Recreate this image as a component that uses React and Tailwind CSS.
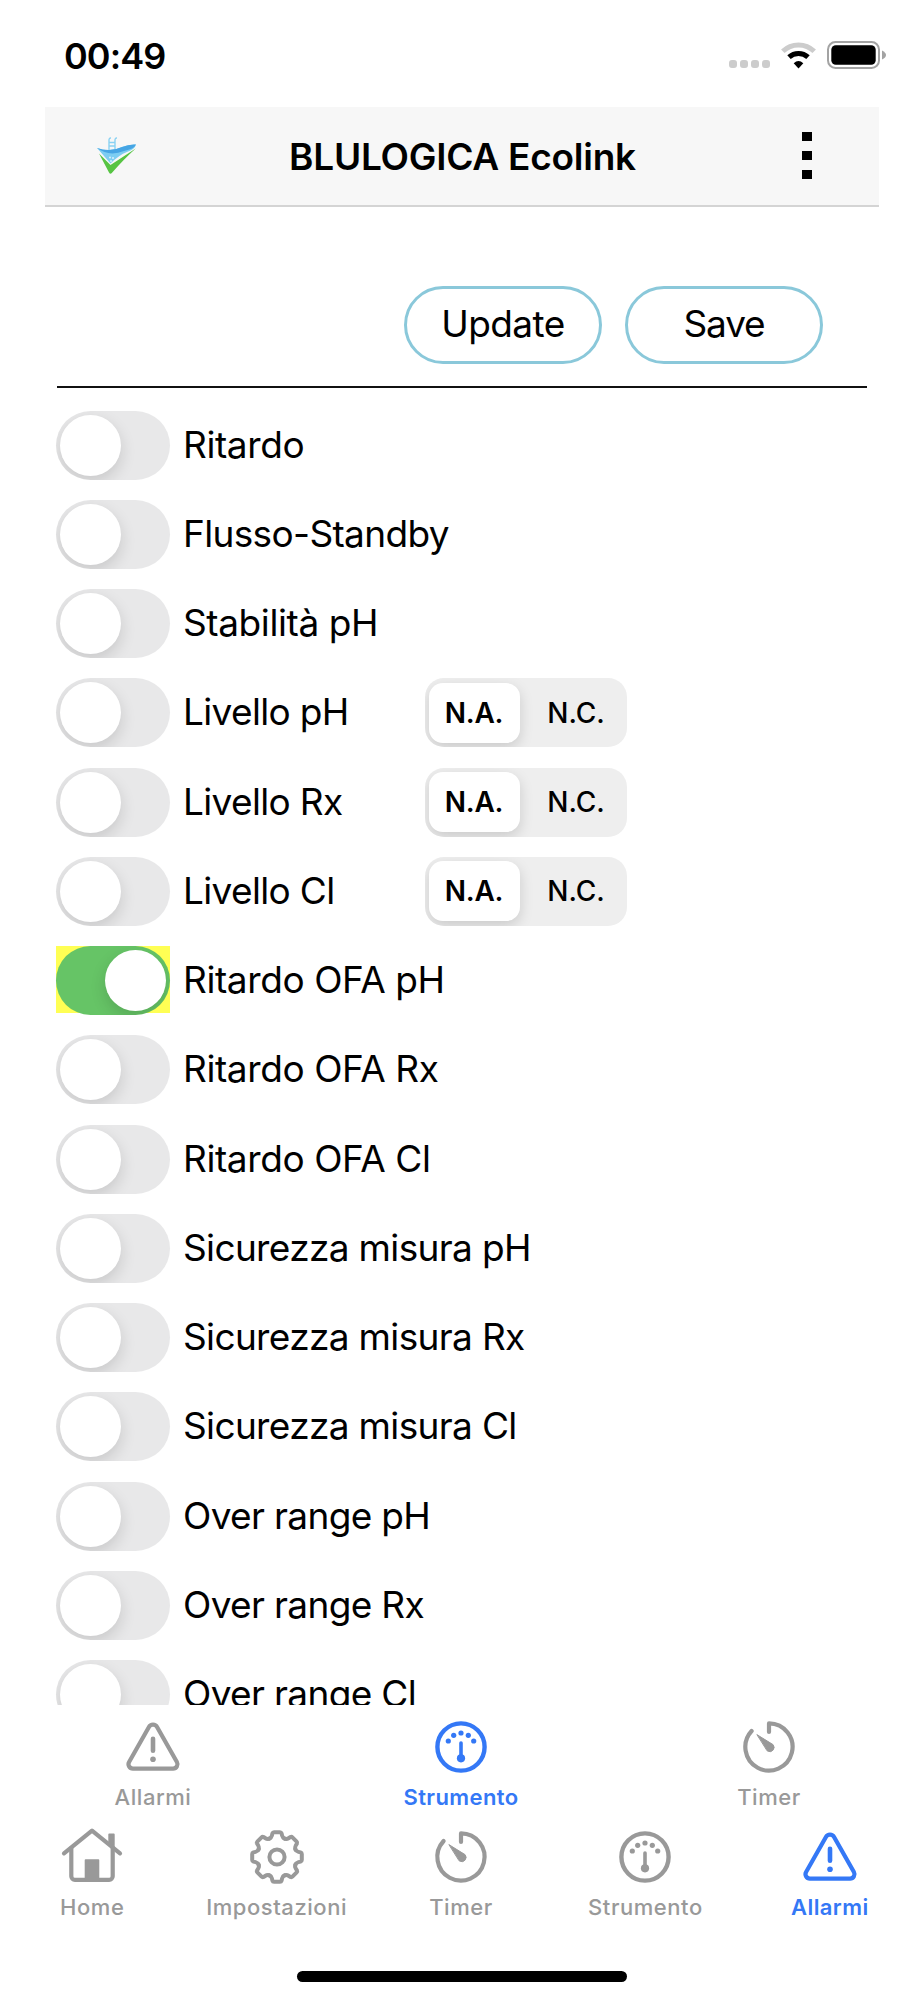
import clsx from "clsx";

const alarms = [
  { label: "Ritardo", wide: true },
  { label: "Flusso-Standby" },
  { label: "Stabilità pH", wide: true },
  { label: "Livello pH", contact: true },
  { label: "Livello Rx", contact: true },
  { label: "Livello Cl", contact: true },
  { label: "Ritardo OFA pH", wide: true, on: true },
  { label: "Ritardo OFA Rx", wide: true },
  { label: "Ritardo OFA Cl", wide: true },
  { label: "Sicurezza misura pH" },
  { label: "Sicurezza misura Rx" },
  { label: "Sicurezza misura Cl" },
  { label: "Over range pH" },
  { label: "Over range Rx" },
  { label: "Over range Cl" },
];

// Icons share a 64x64 box centred on 0,0
const Icon = ({ children }) => (
  <svg
    viewBox="-32 -32 64 64"
    className="h-16 w-16"
    fill="none"
    stroke="currentColor"
    strokeWidth="4.4"
    strokeLinecap="round"
    strokeLinejoin="round"
  >
    {children}
  </svg>
);

const AlarmIcon = () => (
  <Icon>
    <path
      d="M-4.2 -19.8a4.8 4.8 0 0 1 8.4 0L23.9 15a4.4 4.4 0 0 1 -3.8 6.6H-20.1a4.4 4.4 0 0 1 -3.8 -6.6Z"
      strokeWidth="4.2"
    />
    <path d="M0 -8.2V3.8" strokeWidth="4.6" />
    <circle cy="12.2" r="2.8" fill="currentColor" stroke="none" />
  </Icon>
);

const GaugeIcon = () => (
  <Icon>
    <circle r="23.6" />
    <path d="M0 -4V10" strokeWidth="3.6" />
    <g fill="currentColor" stroke="none">
      <circle cy="11.3" r="4.1" />
      <circle cx="-12.7" cy="-6" r="2.6" />
      <circle cx="-7.3" cy="-11.7" r="2.6" />
      <circle cy="-14" r="2.6" />
      <circle cx="7.3" cy="-11.7" r="2.6" />
      <circle cx="12.7" cy="-6" r="2.6" />
    </g>
  </Icon>
);

const TimerIcon = () => (
  <Icon>
    <path d="M0 -15V-23.6A23.6 23.6 0 1 1 -17.4 -16" strokeWidth="4.2" />
    <path
      d="M-11.8 -12.2L4 -2.4A4.3 4.3 0 0 1 -1.6 4Z"
      fill="currentColor"
      strokeWidth="1"
    />
  </Icon>
);

const HomeIcon = () => (
  <Icon>
    <path d="M-28 -3.6L0 -26.3L28 -3.6" strokeWidth="4.2" />
    <path d="M-20.7 -9V19.2a3.6 3.6 0 0 0 3.6 3.6H17.1a3.6 3.6 0 0 0 3.6 -3.6V-9" strokeWidth="4.2" />
    <path
      d="M-6.4 23V3.2H6.4V23ZM17.2 -22.6H21.8V-8L17.2 -12Z"
      fill="currentColor"
      strokeWidth="1.8"
    />
  </Icon>
);

const TOOTH = "M-8 -18.2Q-5.6 -19.2 -5.1 -21.4L-4.6 -23.6Q-4.2 -24.8 -3 -24.8H3Q4.2 -24.8 4.6 -23.6L5.1 -21.4Q5.6 -19.2 8 -18.2";

const SettingsIcon = () => (
  <Icon>
    <circle r="7.6" strokeWidth="4" />
    {[0, 45, 90, 135, 180, 225, 270, 315].map((deg) => (
      <path key={deg} d={TOOTH} transform={`rotate(${deg})`} strokeWidth="4" />
    ))}
  </Icon>
);

const Logo = () => (
  <svg viewBox="0 0 40 38" className="h-[38px] w-10">
    <path d="M2 16.5L13.5 28L38.7 11.5Q27 22 14.8 36Q13.3 37.8 12 35.5Z" fill="#57c443" />
    <path d="M0 11Q13 16 25 10Q32 7 39 7.5Q38 12 30 15Q22 18 13.5 26.5Z" fill="#7ccdf2" />
    <path d="M0 11Q13 15.5 25 10Q32 7 39 7.5Q37 12 27 14Q12 20 0 11Z" fill="#46a5e4" />
    <path
      d="M12 13V3Q12 .8 14 1M18 12V3Q18 .8 20 1M12 5.5H18M12 9H18"
      fill="none"
      stroke="#8ad2f3"
      strokeWidth="1.4"
    />
    <g fill="#d9f1fb">
      <circle cx="13" cy="20.5" r="1" />
      <circle cx="16" cy="21" r="1" />
      <circle cx="14" cy="24" r="1" />
    </g>
  </svg>
);

const StatusBar = () => (
  <div className="flex h-[107px] shrink-0 items-start justify-between pt-[38px] pr-[38px] pl-16">
    <span className="text-[36px] leading-9 font-semibold tracking-[-0.9px]">00:49</span>
    <div className="flex">
      <div className="mt-[22px] mr-[11px] flex gap-[3px]">
        {[0, 1, 2, 3].map((i) => (
          <span key={i} className="h-2 w-2 rounded-[3px] bg-[#cccccc]" />
        ))}
      </div>
      <svg viewBox="0 0 35 27" className="mt-1 mr-[11px] h-[27px] w-[35px]" fill="none">
        <path d="M1.8 9.3A22.5 22.5 0 0 1 33.2 9.3" stroke="#cccccc" strokeWidth="5" />
        <path d="M8 15.2A14 14 0 0 1 27 15.2" stroke="#000" strokeWidth="5" />
        <path d="M12.7 21.2Q17.5 17 22.3 21.2L17.5 26.5Z" fill="#000" />
      </svg>
      <svg viewBox="0 0 59 29" className="mt-[3px] h-[29px] w-[59px]">
        <rect x="1" y="1" width="51" height="26" rx="7.5" fill="none" stroke="#a3a3a3" strokeWidth="2" />
        <rect x="4.3" y="4.3" width="44.4" height="19.4" rx="4.5" fill="#000" />
        <path d="M55 9.5Q59 11.5 59 14Q59 16.5 55 18.5Z" fill="#a3a3a3" />
      </svg>
    </div>
  </div>
);

const Header = () => (
  <header className="mr-[45px] ml-[45px] flex h-[100px] shrink-0 items-center border-b-2 border-[#d4d4d4] bg-[#f7f7f7] pr-[67px] pl-[52px]">
    <Logo />
    <h1 className="flex-1 pr-[14px] text-center text-[37px] leading-none font-semibold tracking-[-0.24px]">
      BLULOGICA Ecolink
    </h1>
    <button className="-mt-0.5 flex flex-col gap-[10px]">
      <span className="h-[9px] w-[10px] bg-black" />
      <span className="h-[9px] w-[10px] bg-black" />
      <span className="h-[9px] w-[10px] bg-black" />
    </button>
  </header>
);

const PillButton = ({ children, className }) => (
  <button
    className={clsx(
      "h-[78px] w-[198px] rounded-full border-[3px] border-[#8ac8da] pb-[3px] text-[37px] leading-none",
      className
    )}
  >
    {children}
  </button>
);

const Switch = ({ on }) => (
  <div className={clsx("h-[67px] w-[114px] shrink-0", on && "bg-[#ffff54]")}>
    <div
      className={clsx(
        "flex h-[69px] items-center overflow-hidden rounded-full px-1",
        on ? "justify-end bg-[#66c466]" : "bg-[#e8e8e9]"
      )}
    >
      <div className="h-[61px] w-[61px] rounded-full bg-white shadow-[0_6px_16px_rgba(0,0,0,0.14)]" />
    </div>
  </div>
);

const ContactSelect = () => (
  <div className="flex h-[69px] w-[202px] items-center overflow-hidden rounded-[19px] bg-[#eeeeee] pl-1 text-[28px]">
    <span className="flex h-[60px] w-[91px] items-center justify-center rounded-[14px] bg-white font-semibold tracking-[-0.2px] shadow-[0_5px_14px_rgba(0,0,0,0.15)]">
      N.A.
    </span>
    <span className="flex-1 pl-1.5 text-center font-medium">N.C.</span>
  </div>
);

const AlarmRow = ({ alarm }) => (
  <div className="flex h-[89.25px] shrink-0 items-start">
    <Switch on={alarm.on} />
    <span
      className={clsx(
        "w-[254.5px] pl-[13px] text-[37px] leading-[67px] whitespace-nowrap",
        alarm.wide ? "tracking-[-0.4px]" : "tracking-[-0.65px]"
      )}
    >
      {alarm.label}
    </span>
    {alarm.contact && <ContactSelect />}
  </div>
);

const Tab = ({ icon: TabIcon, label, active }) => (
  <button
    className={clsx(
      "flex flex-1 basis-0 flex-col items-center text-[22px] leading-none",
      active
        ? "font-semibold tracking-[0.4px] text-[#3478f6]"
        : "font-medium tracking-[0.55px] text-[#999999]"
    )}
  >
    <TabIcon />
    <span className="mt-[7px]">{label}</span>
  </button>
);

export default function App() {
  return (
    <div className="flex h-[2000px] w-[924px] flex-col overflow-hidden bg-white font-['Inter',sans-serif] text-black">
      <StatusBar />
      <Header />

      <main className="flex h-[1498px] shrink-0 flex-col overflow-hidden pr-[57px] pl-14">
        <div className="ml-px flex h-[181px] shrink-0 items-start justify-end gap-[23px] border-b-[2.5px] border-[#111] pt-[79px] pr-11">
          <PillButton className="tracking-[-0.6px]">Update</PillButton>
          <PillButton className="tracking-[-1.2px]">Save</PillButton>
        </div>
        <div className="flex flex-col pt-[22.6px]">
          {alarms.map((alarm) => (
            <AlarmRow key={alarm.label} alarm={alarm} />
          ))}
        </div>
      </main>

      <nav className="-ml-px flex h-[110px] shrink-0 pt-[10px] pr-px">
        <Tab icon={AlarmIcon} label="Allarmi" />
        <Tab icon={GaugeIcon} label="Strumento" active />
        <Tab icon={TimerIcon} label="Timer" />
      </nav>
      <nav className="flex h-[156px] shrink-0 pt-[9.5px] pr-0.5">
        <Tab icon={HomeIcon} label="Home" />
        <Tab icon={SettingsIcon} label="Impostazioni" />
        <Tab icon={TimerIcon} label="Timer" />
        <Tab icon={GaugeIcon} label="Strumento" />
        <Tab icon={AlarmIcon} label="Allarmi" active />
      </nav>
      <div className="h-[11px] w-[330px] shrink-0 self-center rounded-full bg-black" />
    </div>
  );
}
